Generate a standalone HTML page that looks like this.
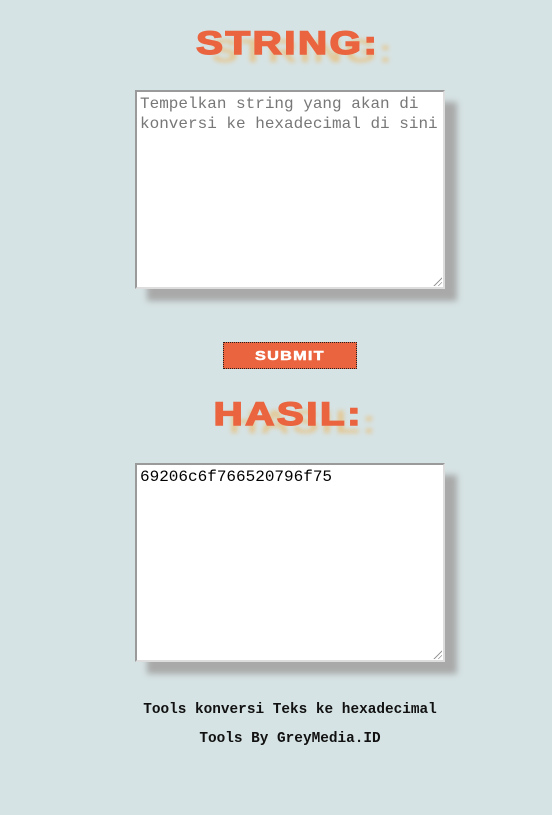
<!DOCTYPE html>
<html><head><meta charset="utf-8"><style>
html,body{margin:0;padding:0}
body{width:552px;height:815px;background:#d6e3e4;position:relative;overflow:hidden;font-family:"Liberation Mono",monospace}
.h{position:absolute;left:12px;width:552px;text-align:center;font-family:"Liberation Sans",sans-serif;font-weight:900;color:#ea643f;font-size:32px;line-height:33px;letter-spacing:2px;text-shadow:12px 8px 4px rgba(232,190,120,.75)}
.h span{display:inline-block;transform:scaleX(1.26);-webkit-text-stroke:1.5px #ea643f}
.ta{position:absolute;left:135px;height:191px;background:#fff;border:2px solid #9a9a9a;border-right-color:#ddd;border-bottom-color:#ddd;box-shadow:12px 12px 6px #a9a9a9;font-size:16px;line-height:20px;padding:2px 3px;box-sizing:content-box;white-space:pre-wrap;width:300px}
.grip{position:absolute;right:1px;bottom:1px;width:10px;height:10px;background:repeating-linear-gradient(135deg,transparent 0 2px,#999 2px 3px);clip-path:polygon(100% 0,100% 100%,0 100%)}
.btn{position:absolute;left:223px;top:342px;width:132px;height:25px;background:#ea643f;border:1px dotted #222;color:#fff;font-family:"Liberation Sans",sans-serif;font-weight:900;font-size:13px;text-align:center;line-height:25px;letter-spacing:1px}
.btn span{display:inline-block;transform:scaleX(1.25);-webkit-text-stroke:.5px #fff}
.f{position:absolute;left:14px;width:552px;text-align:center;font-weight:bold;font-size:14.4px;color:#111;font-family:"Liberation Mono",monospace}
</style></head><body>
<div class="h" style="top:27px"><span>STRING:</span></div>
<div class="ta" style="top:90px;color:#777">Tempelkan string yang akan di konversi ke hexadecimal di sini<div class="grip"></div></div>
<div class="btn"><span>SUBMIT</span></div>
<div class="h" style="top:398px"><span>HASIL:</span></div>
<div class="ta" style="top:463px;color:#000">69206c6f766520796f75<div class="grip"></div></div>
<div class="f" style="top:702px">Tools konversi Teks ke hexadecimal</div>
<div class="f" style="top:731px">Tools By GreyMedia.ID</div>
</body></html>
